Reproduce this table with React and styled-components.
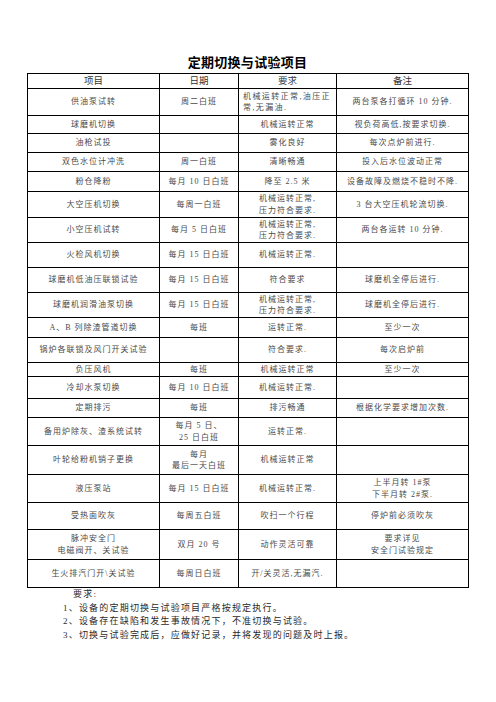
import React from 'react';
import styled, { createGlobalStyle } from 'styled-components';

const Global = createGlobalStyle`
  html, body { margin: 0; padding: 0; background: #fff; }
  body { font-family: "Liberation Serif", "Noto Sans CJK SC", serif; }
`;

const Page = styled.div`
  width: 496px;
  height: 702px;
  box-sizing: border-box;
  padding: 54px 0 0 27px;
  background: #fff;
`;

const Title = styled.h1`
  margin: 0 0 3px 0;
  width: 441px;
  text-align: center;
  font-family: "Noto Sans CJK SC", sans-serif;
  font-size: 13px;
  line-height: 16px;
  font-weight: 700;
  color: #000;
  letter-spacing: 0.3px;
`;

const Table = styled.table`
  border-collapse: collapse;
  table-layout: fixed;
  width: 441px;
`;

const Row = styled.tr`
  height: ${(p) => p.$h}px;
`;

const HeadCell = styled.th`
  border: 1px solid #000;
  padding: 0;
  font-weight: 400;
  font-size: 9.5px;
  line-height: 12px;
  color: #333;
  text-align: center;
  vertical-align: middle;
`;

const Cell = styled.td`
  border: 1px solid #000;
  padding: 0 4px;
  font-size: 8px;
  line-height: 11.5px;
  letter-spacing: ${(p) => (p.$align === 'left' ? '1.4px' : '1px')};
  color: #4a4a4a;
  text-align: ${(p) => p.$align || 'center'};
  vertical-align: middle;
  white-space: nowrap;
`;

const Notes = styled.div`
  margin-top: 0;
  padding-left: 36px;
  font-size: 9px;
  line-height: 13.5px;
  letter-spacing: 1.2px;
  color: #2a2a2a;
`;

const NoteHead = styled.div`
  padding-left: 10px;
`;

const NoteLine = styled.div``;

const widths = [132, 79, 98, 132];

const rows = [
  { h: 27, c: ['供油泵试转', '周二白班', ['机械运转正常,油压正', '常,无漏油.'], '两台泵各打循环 10 分钟.'], left: true },
  { h: 18, c: ['球磨机切换', '', '机械运转正常', '视负荷高低,按要求切换.'] },
  { h: 19, c: ['油枪试投', '', '雾化良好', '每次点炉前进行.'] },
  { h: 19, c: ['双色水位计冲洗', '周一白班', '清晰畅通', '投入后水位波动正常'] },
  { h: 20, c: ['粉仓降粉', '每月 10 日白班', '降至 2.5 米', '设备故障及燃烧不稳时不降.'] },
  { h: 26, c: ['大空压机切换', '每周一白班', ['机械运转正常,', '压力符合要求.'], '3 台大空压机轮流切换.'] },
  { h: 25, c: ['小空压机试转', '每月 5 日白班', ['机械运转正常,', '压力符合要求.'], '两台各运转 10 分钟.'] },
  { h: 25, c: ['火检风机切换', '每月 15 日白班', '机械运转正常.', ''] },
  { h: 25, c: ['球磨机低油压联锁试验', '每月 15 日白班', '符合要求', '球磨机全停后进行.'] },
  { h: 25, c: ['球磨机润滑油泵切换', '每月 15 日白班', ['机械运转正常,', '压力符合要求.'], '球磨机全停后进行.'] },
  { h: 20, c: ['A、B 列除渣管道切换', '每班', '运转正常.', '至少一次'] },
  { h: 25, c: ['锅炉各联锁及风门开关试验', '', '符合要求.', '每次启炉前'] },
  { h: 14, c: ['负压风机', '每班', '机械运转正常', '至少一次'] },
  { h: 22, c: ['冷却水泵切换', '每月 10 日白班', '机械运转正常.', ''] },
  { h: 19, c: ['定期排污', '每班', '排污畅通', '根据化学要求增加次数.'] },
  { h: 28, c: ['备用炉除灰、渣系统试转', ['每月 5 日、', '25 日白班'], '运转正常.', ''] },
  { h: 29, c: ['叶轮给粉机销子更换', ['每月', '最后一天白班'], '机械运转正常', ''] },
  { h: 28, c: ['液压泵站', '每月 15 日白班', '机械运转正常.', ['上半月转 1#泵', '下半月转 2#泵.']] },
  { h: 27, c: ['受热面吹灰', '每周五白班', '吹扫一个行程', '停炉前必须吹灰'] },
  { h: 30, c: [['脉冲安全门', '电磁阀开、关试验'], '双月 20 号', '动作灵活可靠', ['要求详见', '安全门试验规定']] },
  { h: 28, c: ['生火排汽门开\\关试验', '每周日白班', '开/关灵活,无漏汽.', ''] },
];

const renderText = (v) =>
  Array.isArray(v)
    ? v.map((line, i) => (
        <React.Fragment key={i}>
          {i > 0 && <br />}
          {line}
        </React.Fragment>
      ))
    : v;

export default function App() {
  return (
    <Page>
      <Global />
      <Title>定期切换与试验项目</Title>
      <Table>
        <colgroup>
          {widths.map((w, i) => (
            <col key={i} style={{ width: w }} />
          ))}
        </colgroup>
        <thead>
          <Row $h={15}>
            <HeadCell>项目</HeadCell>
            <HeadCell>日期</HeadCell>
            <HeadCell>要求</HeadCell>
            <HeadCell>备注</HeadCell>
          </Row>
        </thead>
        <tbody>
          {rows.map((r, i) => (
            <Row key={i} $h={r.h}>
              {r.c.map((v, j) => (
                <Cell key={j} $align={r.left && j === 2 ? 'left' : 'center'}>
                  {renderText(v)}
                </Cell>
              ))}
            </Row>
          ))}
        </tbody>
      </Table>
      <Notes>
        <NoteHead>要求:</NoteHead>
        <NoteLine>1、设备的定期切换与试验项目严格按规定执行。</NoteLine>
        <NoteLine>2、设备存在缺陷和发生事故情况下，不准切换与试验。</NoteLine>
        <NoteLine>3、切换与试验完成后，应做好记录，并将发现的问题及时上报。</NoteLine>
      </Notes>
    </Page>
  );
}
